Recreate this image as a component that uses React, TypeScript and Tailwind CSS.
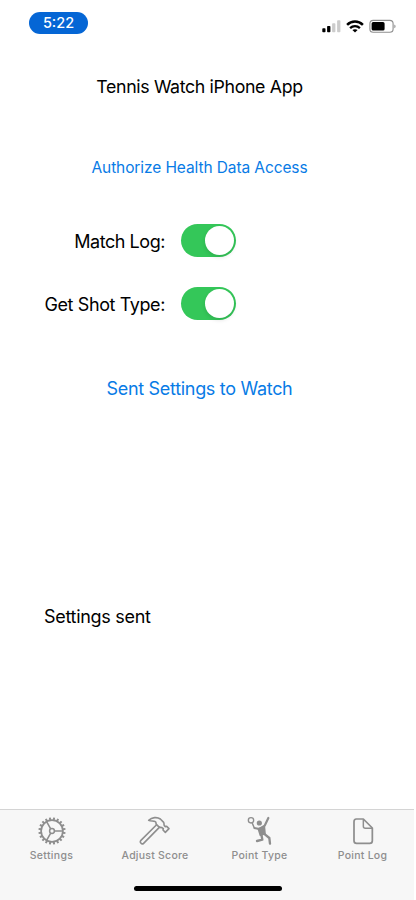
import type { ReactNode } from "react";
import { clsx } from "clsx";

interface ToggleRowProps {
  label: string;
  className?: string;
  labelClassName?: string;
}

interface TabItem {
  label: string;
  icon: ReactNode;
  className: string;
  labelClassName: string;
}

const GEAR_TEETH = Array.from({ length: 20 }, (_, index) => index * 18 + 9);

function SignalIcon() {
  return (
    <svg className="h-[14px] w-[20px]" viewBox="0 0 20 14">
      <rect x="0.3" y="9.3" width="3.2" height="4" rx="0.8" fill="#000" />
      <rect x="5.1" y="6.9" width="3.3" height="6.4" rx="0.8" fill="#000" />
      <rect x="10.1" y="4.3" width="3.3" height="9" rx="0.8" fill="#ccc" />
      <rect x="15.1" y="1.3" width="3.3" height="12" rx="0.8" fill="#ccc" />
    </svg>
  );
}

function WifiIcon() {
  return (
    <svg className="h-[13px] w-[18px]" viewBox="0 0 18 13" fill="none" stroke="#000">
      <path d="M1.1 4.9C5.5 .5 12.5 .5 16.9 4.9" strokeWidth="2.5" />
      <path d="M4.1 8.1c2.8-2.7 7-2.7 9.8 0" strokeWidth="2.3" />
      <path d="M9 12.6 6.4 10.1c1.5-1.3 3.7-1.3 5.2 0Z" fill="#000" stroke="none" />
    </svg>
  );
}

function BatteryIcon() {
  return (
    <svg className="h-[14px] w-[28px]" viewBox="0 0 28 14">
      <rect x="0.9" y="1.4" width="23.2" height="11.8" rx="3.3" fill="none" stroke="#8e8e8e" strokeWidth="1.1" />
      <rect x="2.6" y="3.1" width="13" height="8.4" rx="1.6" fill="#000" />
      <path d="M25.4 5.4v3.9c1.5-.7 1.5-3.2 0-3.9Z" fill="#888" />
    </svg>
  );
}

function GearIcon() {
  return (
    <svg className="h-[32px] w-[32px]" viewBox="-16 -16 32 32" fill="none" stroke="currentColor">
      <circle r="10.9" strokeWidth="1.7" />
      {GEAR_TEETH.map((angle) => (
        <path key={angle} d="M11 0H13.6" strokeWidth="2" transform={`rotate(${angle})`} />
      ))}
      <circle r="2.4" strokeWidth="1.5" />
      <path d="M2.6 0H10.5M-1.3-2.2-5.4-9.3M-1.3 2.2-5.4 9.3" strokeWidth="1.6" />
    </svg>
  );
}

function HammerIcon() {
  return (
    <svg
      className="h-[32px] w-[32px]"
      viewBox="90 30 96 96"
      fill="none"
      stroke="currentColor"
      strokeWidth="4.8"
      strokeLinejoin="round"
      strokeLinecap="round"
    >
      <path d="M119 46C129 37 144 35 154 42L164 52C166 55 164 59 166 62L169 65L173 64L180 71L169 82L162 75L163 71L159 68C155 68 152 68 149 65L142 58C140 54 142 52 139 50C134 46 126 50 119 46Z" />
      <path d="M142 60L95 107C92 111 97 119 103 116L151 67" />
    </svg>
  );
}

function TennisPlayerIcon() {
  return (
    <svg
      className="h-[32px] w-[32px]"
      viewBox="72 30 96 96"
      fill="none"
      stroke="currentColor"
      strokeLinecap="round"
      strokeLinejoin="round"
    >
      <circle cx="93" cy="46" r="8" strokeWidth="4" />
      <path d="M97 55L102 67" strokeWidth="4.5" />
      <circle cx="118" cy="54" r="7.8" fill="currentColor" stroke="none" />
      <path d="M103 69L118 72L134 62L145 39" strokeWidth="6.5" />
      <path d="M115 71L133 65L135 86L121 91Z" fill="currentColor" strokeWidth="5" />
      <path d="M124 88L127 104L111 108" strokeWidth="7" />
      <path d="M131 85L148 99L150 116" strokeWidth="7" />
    </svg>
  );
}

function DocumentIcon() {
  return (
    <svg
      className="h-[32px] w-[32px]"
      viewBox="80 30 96 96"
      fill="none"
      stroke="currentColor"
      strokeWidth="5.2"
      strokeLinejoin="round"
    >
      <path d="M108 42H129L156 69V107Q156 115 148 115H109Q101 115 101 107V50Q101 42 108 42Z" />
      <path d="M129 43V64Q129 70 135 70H155" strokeWidth="4.4" />
    </svg>
  );
}

const tabs: TabItem[] = [
  { label: "Settings", icon: <GearIcon />, className: "w-[103px]", labelClassName: "tracking-[0.34px]" },
  { label: "Adjust Score", icon: <HammerIcon />, className: "w-[104px]", labelClassName: "tracking-[0.24px]" },
  { label: "Point Type", icon: <TennisPlayerIcon />, className: "w-[105px]", labelClassName: "tracking-[0.28px]" },
  { label: "Point Log", icon: <DocumentIcon />, className: "w-[101px]", labelClassName: "tracking-[0.24px]" },
];

function ToggleRow({ label, className, labelClassName }: ToggleRowProps) {
  return (
    <div className={clsx("flex h-[33px] items-center", className)}>
      <span className={clsx("w-[165px] pt-[2px] text-right text-[18px] leading-6 whitespace-nowrap", labelClassName)}>
        {label}
      </span>
      <button
        type="button"
        role="switch"
        aria-checked="true"
        aria-label={label}
        className="ml-4 flex h-[33px] w-[55px] items-center justify-end rounded-full bg-[#34c759] pr-[2px]"
      >
        <span className="size-[29px] rounded-full bg-white shadow-[0_2px_4px_rgba(0,0,0,0.12)]" />
      </button>
    </div>
  );
}

export default function App() {
  return (
    <div className="flex h-[900px] w-[416px] flex-col overflow-hidden bg-white font-['Inter',sans-serif] text-black">
      <header className="flex h-[47px] items-start justify-between pt-3 pr-[19px] pl-[29px]">
        <div className="flex h-[22px] w-[59px] items-center justify-center rounded-full bg-[#0566d5] text-[14.5px] font-medium text-white">
          5:22
        </div>
        <div className="flex items-center pt-[7px]">
          <SignalIcon />
          <span className="ml-[4px]">
            <WifiIcon />
          </span>
          <span className="ml-[5px]">
            <BatteryIcon />
          </span>
        </div>
      </header>

      <main className="flex w-[399px] flex-1 flex-col pt-7">
        <h1 className="text-center text-[17.75px] leading-6 tracking-[-0.35px]">Tennis Watch iPhone App</h1>
        <button type="button" className="mt-[57px] h-6 text-[15.5px] leading-6 tracking-[-0.1px] text-[#087be6]">
          Authorize Health Data Access
        </button>
        <ToggleRow label="Match Log:" className="mt-[44px]" labelClassName="tracking-[-0.45px]" />
        <ToggleRow label="Get Shot Type:" className="mt-[30px]" labelClassName="tracking-[-0.4px]" />
        <button type="button" className="mt-[57px] h-6 text-[18px] leading-6 tracking-[-0.31px] text-[#087be6]">
          Sent Settings to Watch
        </button>
        <p className="mt-[204px] pl-11 text-[18px] leading-6 tracking-[-0.3px]">Settings sent</p>
      </main>

      <footer className="flex h-[91px] w-[414px] flex-col border-t border-[#d4d4d4] bg-[#f7f7f7]">
        <nav className="flex text-[#8e8e8e]">
          {tabs.map((tab) => (
            <button
              key={tab.label}
              type="button"
              className={clsx("flex flex-col items-center pt-[5px]", tab.className)}
            >
              {tab.icon}
              <span className={clsx("mt-[2px] text-[10.5px] leading-[14px] font-medium whitespace-nowrap", tab.labelClassName)}>
                {tab.label}
              </span>
            </button>
          ))}
        </nav>
        <div className="mt-[23px] ml-[134px] h-[5px] w-[148px] rounded-full bg-black" />
      </footer>
    </div>
  );
}
